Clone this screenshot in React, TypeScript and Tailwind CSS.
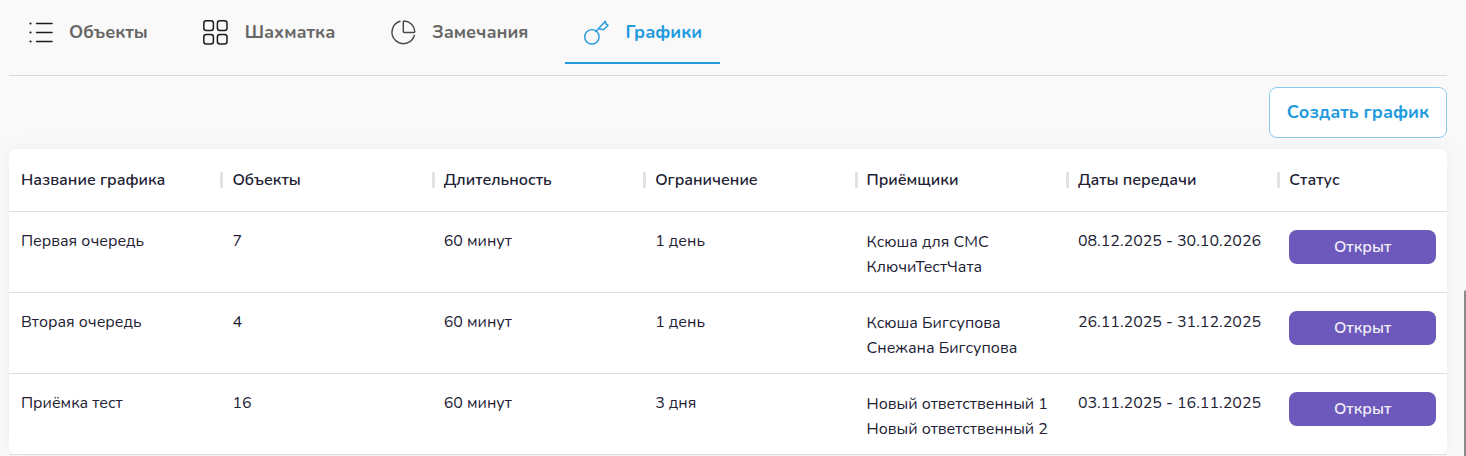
import { ReactNode } from "react"
import clsx from "clsx"

const ListIcon = () => (
  <svg
    className="w-6 h-6 shrink-0 overflow-visible"
    viewBox="0 0 24 24"
    fill="none"
    stroke="currentColor"
  >
    <path d="M9.5 3.5H25M9.5 12.5H25M9.5 21.5H25" strokeWidth="1.5" strokeLinecap="round" />
    <path d="M3.5 3.5h.01M3.5 12.5h.01M3.5 21.5h.01" strokeWidth="2.2" strokeLinecap="round" />
  </svg>
)

const GridIcon = () => (
  <svg
    className="w-6 h-6 shrink-0 overflow-visible"
    viewBox="0 0 24 24"
    fill="none"
    stroke="currentColor"
    strokeWidth="1.5"
  >
    <rect x="0.8" y="0.8" width="9.6" height="9.6" rx="2.5" />
    <rect x="14.4" y="0.8" width="9.6" height="9.6" rx="2.5" />
    <rect x="0.8" y="14.4" width="9.6" height="9.6" rx="2.5" />
    <rect x="14.4" y="14.4" width="9.6" height="9.6" rx="2.5" />
  </svg>
)

const PieIcon = () => (
  <svg
    className="w-6 h-6 shrink-0 overflow-visible"
    viewBox="0 0 24 24"
    fill="none"
    stroke="currentColor"
    strokeWidth="1.5"
    strokeLinecap="round"
    strokeLinejoin="round"
  >
    <path d="M10 1.3A11.4 11.4 0 1 0 24.3 15.5" />
    <path d="M13.3 2v9.5a1 1 0 0 0 1 1H23.8a1 1 0 0 0 1-1A11 11 0 0 0 14.3 1a1 1 0 0 0-1 1Z" />
  </svg>
)

const KeyIcon = () => (
  <svg
    className="w-6 h-6 shrink-0 overflow-visible"
    viewBox="0 0 24 24"
    fill="none"
    stroke="currentColor"
    strokeWidth="1.4"
    strokeLinecap="round"
    strokeLinejoin="round"
  >
    <circle cx="8.9" cy="16.8" r="7.2" />
    <path d="M12.8 11.5L22.4 1.2M22.4 1.2L22.8 3.6L25 5.4L20.4 9.8L15.8 8.6" />
  </svg>
)

interface Tab {
  title: string
  icon: ReactNode
  color: string
}

const tabs: Tab[] = [
  { title: "Объекты", icon: <ListIcon />, color: "text-[#1c1c1c]" },
  { title: "Шахматка", icon: <GridIcon />, color: "text-[#1c1c1c]" },
  { title: "Замечания", icon: <PieIcon />, color: "text-[#4a4a4a]" },
  { title: "Графики", icon: <KeyIcon />, color: "text-[#229ade]" },
]

const columns = [
  "Название графика",
  "Объекты",
  "Длительность",
  "Ограничение",
  "Приёмщики",
  "Даты передачи",
  "Статус",
]

const schedules = [
  {
    name: "Первая очередь",
    objects: 7,
    duration: "60 минут",
    limit: "1 день",
    receivers: ["Ксюша для СМС", "КлючиТестЧата"],
    dates: "08.12.2025 - 30.10.2026",
    status: "Открыт",
  },
  {
    name: "Вторая очередь",
    objects: 4,
    duration: "60 минут",
    limit: "1 день",
    receivers: ["Ксюша Бигсупова", "Снежана Бигсупова"],
    dates: "26.11.2025 - 31.12.2025",
    status: "Открыт",
  },
  {
    name: "Приёмка тест",
    objects: 16,
    duration: "60 минут",
    limit: "3 дня",
    receivers: ["Новый ответственный 1", "Новый ответственный 2"],
    dates: "03.11.2025 - 16.11.2025",
    status: "Открыт",
  },
]

const Tabs = () => (
  <nav className="flex gap-[19px] border-b border-[#dadada] pb-[11px]">
    {tabs.map((tab) => {
      const active = tab.title === "Графики"
      return (
        <a
          key={tab.title}
          href="#"
          className={clsx(
            "flex items-center gap-[18px] h-16 px-[18px] pt-0.5 border-b-2 whitespace-nowrap",
            active ? "border-[#229ade]" : "border-transparent"
          )}
        >
          <span className={tab.color}>{tab.icon}</span>
          <span
            className={clsx(
              "text-lg font-bold",
              active ? "text-[#229ade]" : "text-[#666]"
            )}
          >
            {tab.title}
          </span>
        </a>
      )
    })}
  </nav>
)

const ScheduleTable = () => (
  <div className="bg-white rounded-lg shadow-[0_0_20px_rgba(0,0,0,0.05)]">
    <table className="w-full table-fixed text-left text-base leading-[25px] text-[#212134]">
      <thead>
        <tr className="border-b border-[#dedede]">
          {columns.map((column, i) => (
            <th
              key={column}
              className={clsx(
                "h-[62px] p-0 font-semibold whitespace-nowrap",
                i < columns.length - 1 ? "w-[14.7%]" : "w-[11.8%]"
              )}
            >
              <div
                className={clsx(
                  "h-4 flex items-center pl-[9px] pt-0.5",
                  i > 0 ? "border-l-3 border-[#e2e2e2]" : "ml-[3px]"
                )}
              >
                {column}
              </div>
            </th>
          ))}
        </tr>
      </thead>
      <tbody>
        {schedules.map((item) => (
          <tr key={item.name} className="border-b border-[#dedede] align-top">
            <td className="pl-3 pr-[11px] pt-[17px]">{item.name}</td>
            <td className="pl-3 pr-[11px] pt-[17px]">{item.objects}</td>
            <td className="pl-3 pr-[11px] pt-[17px]">{item.duration}</td>
            <td className="pl-3 pr-[11px] pt-[17px]">{item.limit}</td>
            <td className="pl-3 pr-[11px] pt-[18px] pb-3 whitespace-nowrap">
              {item.receivers.map((receiver) => (
                <p key={receiver}>{receiver}</p>
              ))}
            </td>
            <td className="pl-3 pr-[11px] pt-[17px] whitespace-nowrap">{item.dates}</td>
            <td className="pl-3 pr-[11px] pt-[18px]">
              <div className="rounded-lg bg-[#6d58bb] h-[34px] leading-[34px] text-center font-semibold text-[#f0eef8]">
                {item.status}
              </div>
            </td>
          </tr>
        ))}
      </tbody>
    </table>
  </div>
)

const App = () => {
  return (
    <main className="relative h-screen overflow-hidden bg-[#f9f9f9] pl-[9px] pr-[19px] font-['Nunito','Noto_Sans',sans-serif]">
      <Tabs />
      <div className="flex justify-end py-[11px]">
        <button
          type="button"
          className="h-[51px] px-[17px] pb-0.5 rounded-lg border border-[#8ccbf0] bg-white text-lg font-bold text-[#229ade] cursor-pointer"
        >
          Создать график
        </button>
      </div>
      <ScheduleTable />
      <div className="absolute right-0 top-[290px] bottom-0 w-0.5 rounded-tl bg-[#8b8b8b]" />
    </main>
  )
}

export default App
